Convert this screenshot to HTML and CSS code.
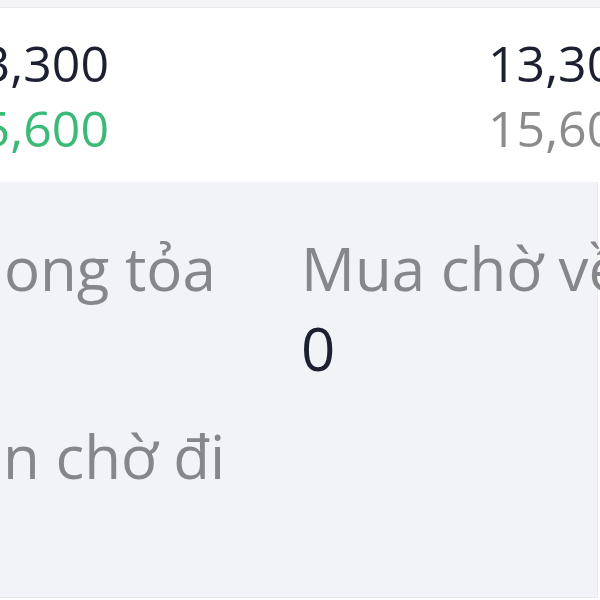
FILE: index.html
```html
<!DOCTYPE html>
<html lang="vi">

<head>
    <meta charset="UTF-8">
    <meta name="viewport" content="width=device-width, initial-scale=1.0">
    <title>Chi tiết mã</title>
    <link rel="stylesheet" href="styles.css">
</head>

<body>
    <div class="screen">
        <div class="top-strip"></div>

        <!-- Price rows -->
        <div class="prices">
            <div class="price-col left">
                <div class="price dark">13,300</div>
                <div class="price green">15,600</div>
            </div>
            <div class="price-col right">
                <div class="price dark">13,300</div>
                <div class="price grey">15,600</div>
            </div>
        </div>

        <!-- Stats block -->
        <div class="stats">
            <div class="stat">
                <div class="stat-label">Phong tỏa</div>
                <div class="stat-value">&nbsp;</div>
            </div>
            <div class="stat">
                <div class="stat-label">Mua chờ về</div>
                <div class="stat-value">0</div>
            </div>
            <div class="stat">
                <div class="stat-label">Bán chờ đi</div>
            </div>
        </div>
    </div>
</body>

</html>
```

FILE: styles.css
```css
body {
    margin: 0;
    padding: 0;
    font-family: "Open Sans", "Noto Sans", sans-serif;
}

.screen {
    width: 600px;
    height: 600px;
    overflow: hidden;
    display: flex;
    flex-direction: column;
    background-color: #ffffff;
}

.top-strip {
    height: 7px;
    flex-shrink: 0;
    background-color: #f4f4f6;
    border-bottom: 1px solid #ebebee;
}

.prices {
    height: 174px;
    flex-shrink: 0;
    box-sizing: border-box;
    padding-top: 23px;
    display: flex;
    gap: 379px;
    background-color: #ffffff;
}

.price-col {
    display: flex;
    flex-direction: column;
    white-space: nowrap;
}

.price-col.left {
    width: 109px;
    align-items: flex-end;
}

.price {
    font-size: 50px;
    line-height: 65px;
}

.dark {
    color: #1d2030;
}

.green {
    color: #3bba77;
}

.grey {
    color: #8b8b8d;
}

.stats {
    flex: 1;
    margin: 0 2px 2px -70px;
    padding-top: 46px;
    border: 1px solid #e8e9ec;
    border-top: none;
    background-color: #f2f3f7;
    display: grid;
    grid-template-columns: 370px 1fr;
    row-gap: 28px;
    align-content: start;
    white-space: nowrap;
}

.stat-label {
    font-size: 60px;
    line-height: 80px;
    color: #86878b;
}

.stat-value {
    font-size: 60px;
    line-height: 80px;
    color: #1d2030;
}
```
